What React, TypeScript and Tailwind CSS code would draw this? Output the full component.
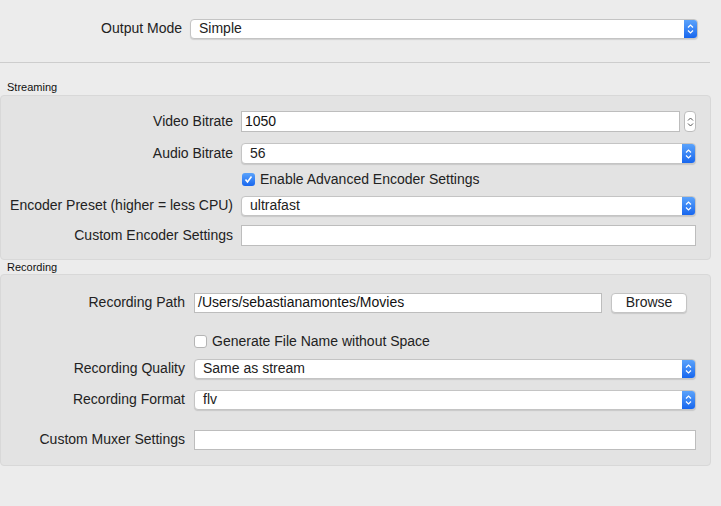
import React from "react";

const Chevrons = () => (
  <svg width="7" height="12" viewBox="0 0 7 12" fill="none" stroke="white" strokeWidth="1.2">
    <path d="M1 4.5 L3.5 2 L6 4.5" />
    <path d="M1 7.5 L3.5 10 L6 7.5" />
  </svg>
);

const Select = ({ value, h = "h-[21px]" }: { value: string; h?: string }) => (
  <div className={`flex flex-1 ${h} bg-white border border-[#c4c4c4] rounded-[4px] shadow-[0_1px_1px_rgba(0,0,0,0.12)] overflow-hidden`}>
    <div className="flex-1 pl-2 flex items-center text-[14px] text-[#222]">{value}</div>
    <div className="w-[13px] flex items-center justify-center bg-gradient-to-b from-[#5aa2fb] to-[#1766ee]">
      <Chevrons />
    </div>
  </div>
);

const Input = ({ value = "", h = "h-[21px]", cls = "flex-1" }: { value?: string; h?: string; cls?: string }) => (
  <div className={`${cls} ${h} bg-white border border-[#bdbdbd] flex items-center pl-[3px] text-[14px] text-[#111]`}>{value}</div>
);

const Row = ({ label, w, children, gap = "gap-2" }: { label: string; w: string; children: React.ReactNode; gap?: string }) => (
  <div className={`flex items-center ${gap}`}>
    <div className={`${w} text-right text-[14px] text-[#222] shrink-0 whitespace-nowrap`}>{label}</div>
    {children}
  </div>
);

const Check = ({ on }: { on?: boolean }) =>
  on ? (
    <div className="w-[13px] h-[13px] rounded-[3px] bg-gradient-to-b from-[#5aa2fb] to-[#1766ee] flex items-center justify-center">
      <svg width="9" height="9" viewBox="0 0 9 9" fill="none" stroke="white" strokeWidth="1.6">
        <path d="M1.5 4.5 L3.5 7 L7.5 1.5" />
      </svg>
    </div>
  ) : (
    <div className="w-[13px] h-[13px] rounded-[3px] bg-white border border-[#b5b5b5]" />
  );

export default function App() {
  return (
    <div className="w-[721px] h-[506px] bg-[#ececec] overflow-hidden" style={{ fontFamily: '"Helvetica Neue", "Liberation Sans", Arial, sans-serif' }}>
      <div className="pt-[18px] pr-[23px]">
        <Row label="Output Mode" w="w-[182px]">
          <Select value="Simple" h="h-[20px]" />
        </Row>
      </div>
      <div className="mt-[23px] mr-[11px] h-px bg-[#cdcdcd]" />
      <div className="mt-[18px] pl-[7px] text-[11px] leading-[12px] text-[#111]">Streaming</div>
      <div className="mt-[2px] mr-[10px] bg-[#e3e3e3] border border-[#d8d8d8] rounded-[4px] pt-[15px] pb-[13px] pr-[14px] flex flex-col">
        <Row label="Video Bitrate" w="w-[232px]">
          <Input value="1050" />
          <div className="w-[12px] h-[21px] ml-[-4px] bg-white border border-[#bdbdbd] rounded-[4px] flex items-center justify-center">
            <svg width="7" height="12" viewBox="0 0 7 12" fill="none" stroke="#555" strokeWidth="1">
              <path d="M1 4.5 L3.5 2 L6 4.5" />
              <path d="M1 7.5 L3.5 10 L6 7.5" />
            </svg>
          </div>
        </Row>
        <div className="mt-[11px]">
          <Row label="Audio Bitrate" w="w-[232px]">
            <Select value="56" />
          </Row>
        </div>
        <div className="mt-[8px] pl-[241px] flex items-center gap-[5px] h-[14px] text-[14px] text-[#222]">
          <Check on />
          Enable Advanced Encoder Settings
        </div>
        <div className="mt-[9px]">
          <Row label="Encoder Preset (higher = less CPU)" w="w-[232px]">
            <Select value="ultrafast" h="h-[20px]" />
          </Row>
        </div>
        <div className="mt-[9px]">
          <Row label="Custom Encoder Settings" w="w-[232px]">
            <Input />
          </Row>
        </div>
      </div>
      <div className="mt-[1px] pl-[7px] text-[11px] leading-[12px] text-[#111]">Recording</div>
      <div className="mt-[1px] mr-[10px] bg-[#e3e3e3] border border-[#d8d8d8] rounded-[4px] pt-[17px] pb-[15px] pr-[14px] flex flex-col">
        <Row label="Recording Path" w="w-[184px]" gap="gap-[9px]">
          <Input value="/Users/sebastianamontes/Movies" h="h-[20px]" />
          <div className="w-[76px] h-[20px] bg-white border border-[#c4c4c4] rounded-[4px] shadow-[0_1px_1px_rgba(0,0,0,0.12)] flex items-center justify-center text-[14px] text-[#222]">Browse</div>
          <div className="w-[-2px]" />
        </Row>
        <div className="mt-[21px] pl-[193px] flex items-center gap-[5px] h-[14px] text-[14px] text-[#222]">
          <Check />
          Generate File Name without Space
        </div>
        <div className="mt-[10px]">
          <Row label="Recording Quality" w="w-[184px]" gap="gap-[9px]">
            <Select value="Same as stream" h="h-[20px]" />
          </Row>
        </div>
        <div className="mt-[10px]">
          <Row label="Recording Format" w="w-[184px]" gap="gap-[9px]">
            <Select value="flv" h="h-[20px]" />
          </Row>
        </div>
        <div className="mt-[19px]">
          <Row label="Custom Muxer Settings" w="w-[184px]" gap="gap-[9px]">
            <Input h="h-[20px]" />
          </Row>
        </div>
      </div>
    </div>
  );
}
